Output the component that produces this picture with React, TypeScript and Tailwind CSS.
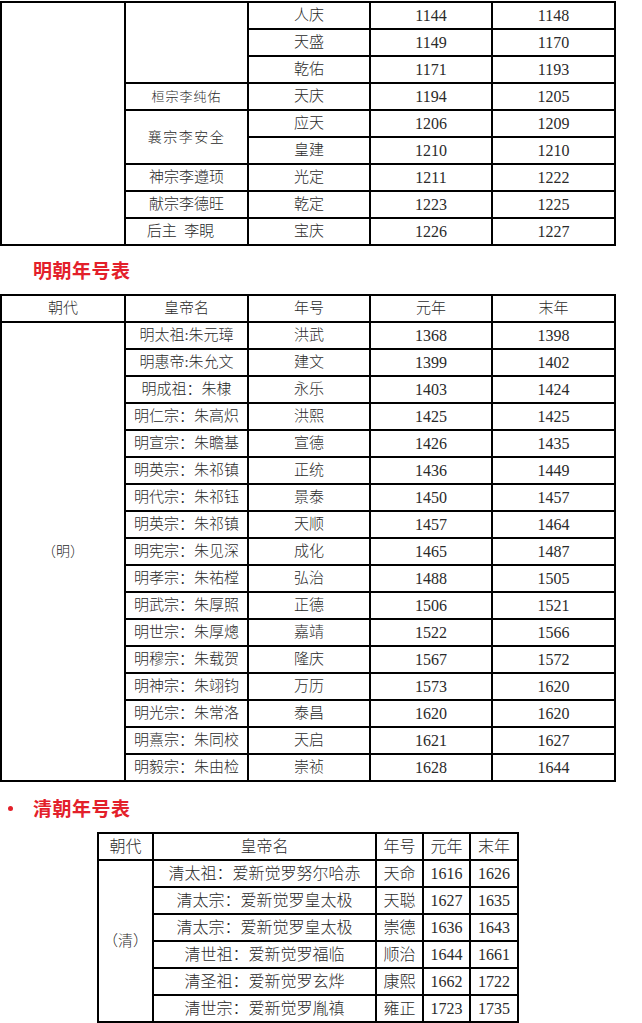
import React from 'react'

const FONT = '[font-family:"Liberation_Serif","Noto_Sans_CJK_SC",serif]'

// tail of the 西夏 table carried over from the previous page
const xixia: { emperor?: React.ReactNode; span?: number; era: string; start: number; end: number }[] = [
    { emperor: '', span: 3, era: '人庆', start: 1144, end: 1148 },
    { era: '天盛', start: 1149, end: 1170 },
    { era: '乾佑', start: 1171, end: 1193 },
    { emperor: <span className="text-[13px] tracking-[1px]">桓宗李纯佑</span>, era: '天庆', start: 1194, end: 1205 },
    { emperor: <span className="text-[14px] tracking-[1.5px]">襄宗李安全</span>, span: 2, era: '应天', start: 1206, end: 1209 },
    { era: '皇建', start: 1210, end: 1210 },
    { emperor: '神宗李遵顼', era: '光定', start: 1211, end: 1222 },
    { emperor: '献宗李德旺', era: '乾定', start: 1223, end: 1225 },
    { emperor: <span className="pr-[12px]">后主&nbsp;&nbsp;李睍</span>, era: '宝庆', start: 1226, end: 1227 },
]

const ming = [
    ['明太祖:朱元璋', '洪武', 1368, 1398],
    ['明惠帝:朱允文', '建文', 1399, 1402],
    ['明成祖：朱棣', '永乐', 1403, 1424],
    ['明仁宗：朱高炽', '洪熙', 1425, 1425],
    ['明宣宗：朱瞻基', '宣德', 1426, 1435],
    ['明英宗：朱祁镇', '正统', 1436, 1449],
    ['明代宗：朱祁钰', '景泰', 1450, 1457],
    ['明英宗：朱祁镇', '天顺', 1457, 1464],
    ['明宪宗：朱见深', '成化', 1465, 1487],
    ['明孝宗：朱祐樘', '弘治', 1488, 1505],
    ['明武宗：朱厚照', '正德', 1506, 1521],
    ['明世宗：朱厚熜', '嘉靖', 1522, 1566],
    ['明穆宗：朱载贺', '隆庆', 1567, 1572],
    ['明神宗：朱翊钧', '万历', 1573, 1620],
    ['明光宗：朱常洛', '泰昌', 1620, 1620],
    ['明熹宗：朱同校', '天启', 1621, 1627],
    ['明毅宗：朱由检', '崇祯', 1628, 1644],
] as const

const qing = [
    ['清太祖：爱新觉罗努尔哈赤', '天命', 1616, 1626],
    ['清太宗：爱新觉罗皇太极', '天聪', 1627, 1635],
    ['清太宗：爱新觉罗皇太极', '崇德', 1636, 1643],
    ['清世祖：爱新觉罗福临', '顺治', 1644, 1661],
    ['清圣祖：爱新觉罗玄烨', '康熙', 1662, 1722],
    ['清世宗：爱新觉罗胤禛', '雍正', 1723, 1735],
] as const

const td = 'border-2 border-black p-0 text-center align-middle whitespace-nowrap'
const num = `${td} text-[16px]`

function Title({ text, bullet }: { text: string; bullet?: boolean }) {
    return (
        <div className="flex items-center h-[48px]">
            <div className="w-[33px] flex items-center">
                {bullet && <span className="ml-[8px] w-[5px] h-[5px] rounded-full bg-[#e3202a]" />}
            </div>
            <span className="text-[19px] font-bold text-[#e3202a] tracking-[0.5px] [font-family:'Noto_Sans_CJK_SC',sans-serif]">
                {text}
            </span>
        </div>
    )
}

export default function App() {
    return (
        <div className={`w-[642px] h-[1023px] bg-white text-[#2a2a2a] text-[15px] font-light overflow-hidden ${FONT}`}>
            {/* 西夏 continued */}
            <table className="table-fixed border-collapse w-[616px] mt-[1px]">
                <colgroup>
                    <col className="w-[124px]" />
                    <col className="w-[123px]" />
                    <col className="w-[122px]" />
                    <col className="w-[122px]" />
                    <col className="w-[123px]" />
                </colgroup>
                <tbody>
                    {xixia.map((r, i) => (
                        <tr key={i} className="h-[27px]">
                            {i === 0 && <td className={td} rowSpan={xixia.length} />}
                            {r.emperor !== undefined && (
                                <td className={td} rowSpan={r.span ?? 1}>{r.emperor}</td>
                            )}
                            <td className={td}>{r.era}</td>
                            <td className={num}>{r.start}</td>
                            <td className={num}>{r.end}</td>
                        </tr>
                    ))}
                </tbody>
            </table>

            <Title text="明朝年号表" />

            <table className="table-fixed border-collapse w-[616px]">
                <colgroup>
                    <col className="w-[124px]" />
                    <col className="w-[123px]" />
                    <col className="w-[122px]" />
                    <col className="w-[122px]" />
                    <col className="w-[123px]" />
                </colgroup>
                <tbody>
                    <tr className="h-[27px]">
                        <td className={td}>朝代</td>
                        <td className={td}>皇帝名</td>
                        <td className={td}>年号</td>
                        <td className={td}>元年</td>
                        <td className={td}>末年</td>
                    </tr>
                    {ming.map((r, i) => (
                        <tr key={i} className="h-[27px]">
                            {i === 0 && (
                                <td className={td} rowSpan={ming.length}>
                                    <span className="text-[14px]">（明）</span>
                                </td>
                            )}
                            <td className={td}>{r[0]}</td>
                            <td className={td}>{r[1]}</td>
                            <td className={num}>{r[2]}</td>
                            <td className={num}>{r[3]}</td>
                        </tr>
                    ))}
                </tbody>
            </table>

            <div className="h-[2px]" />
            <Title text="清朝年号表" bullet />

            <table className="table-fixed border-collapse w-[420px] ml-[97px] text-[16px]">
                <colgroup>
                    <col className="w-[55px]" />
                    <col className="w-[223px]" />
                    <col className="w-[47px]" />
                    <col className="w-[47px]" />
                    <col className="w-[48px]" />
                </colgroup>
                <tbody>
                    <tr className="h-[27px]">
                        <td className={td}>朝代</td>
                        <td className={td}>皇帝名</td>
                        <td className={td}>年号</td>
                        <td className={td}>元年</td>
                        <td className={td}>末年</td>
                    </tr>
                    {qing.map((r, i) => (
                        <tr key={i} className="h-[27px]">
                            {i === 0 && (
                                <td className={td} rowSpan={qing.length}>
                                    <span className="text-[15px]">（清）</span>
                                </td>
                            )}
                            <td className={td}>{r[0]}</td>
                            <td className={td}>{r[1]}</td>
                            <td className={num}>{r[2]}</td>
                            <td className={num}>{r[3]}</td>
                        </tr>
                    ))}
                </tbody>
            </table>
        </div>
    )
}
